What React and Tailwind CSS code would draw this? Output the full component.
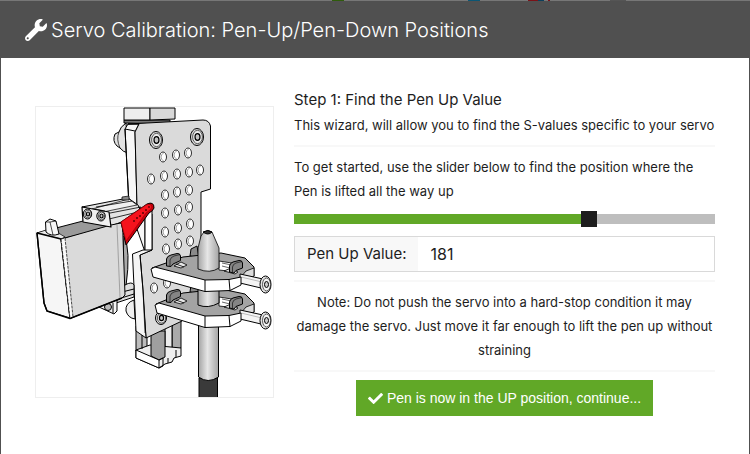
import { useState } from 'react';
import { FaCheck, FaWrench } from 'react-icons/fa';

const MAX_S_VALUE = 255;

const HOLES = [
    [163, 157], [176, 155], [188, 153],
    [151, 179], [164, 176], [177, 174], [189, 172], [200, 170],
    [165, 195], [177, 192], [189, 190],
    [165, 213], [178, 210], [189, 207],
    [165, 232], [178, 228], [190, 224],
    [166, 249], [178, 244], [190, 241],
    [154, 288], [167, 283],
];

const Screw = ({ x, y, rx = 6.5, ry = 8.5 }) => (
    <g>
        <ellipse cx={x} cy={y} rx={rx} ry={ry} fill="#dadada" />
        <ellipse cx={x + 0.5} cy={y} rx={rx * 0.75} ry={ry * 0.78} fill="#ececec" strokeWidth="0.6" />
        <ellipse cx={x + 0.5} cy={y} rx={rx * 0.38} ry={ry * 0.4} fill="#c4c4c4" strokeWidth="1.2" />
    </g>
);

// dx moves only the left end, the lower clamp is a bit shorter than the upper one
const Clamp = ({ y, dx = 0 }) => (
    <g transform={`translate(0 ${y})`}>
        <path d="M190 256 L191 249 L197 246 L199 258 Z" fill="#8a8a8a" />
        <path d={`M${152 + dx} 268 L183 257 L221 253 L245 258 L254 267 V276 L241 281 L205 284 Z`} fill="#a3a3a3" />
        <path d="M241 277 L246 271 L254 268 V276 L241 282 Z" fill="#dcdcdc" strokeWidth="0.8" />
        <path d="M219 261 L238 264 L228 271 L219 270 Z" fill="#fff" strokeWidth="0.8" />
        <path d="M222 263 L234 265.5 M222 266 L230 268" strokeWidth="0.6" />
        <path d="M240 274 L263 279 L261 288 L240 283 Z" fill="#f4f4f4" />
        <path d="M241 277 L262 282" stroke="#bbb" />
        <ellipse cx="265.5" cy="284.5" rx="5.5" ry="8.5" fill="#e4e4e4" />
        <ellipse cx="266.5" cy="284.5" rx="4" ry="6.5" fill="#f4f4f4" strokeWidth="0.6" />
        <ellipse cx="266.5" cy="284.5" rx="2" ry="3" fill="#ccc" />
        <path d={`M${151 + dx} 269 L${155 + dx} 267 L205 280 L229 279.5 L241 277 V285 L230 290.5 L205 291.5 L${153 + dx} 277 Z`} fill="#fff" />
        <path d="M205 280 V291.5 M229 279.5 L230 290.5" />
        <path d="M174 266 L181 262 L187 265 L181 268 Z" fill="#e8e8e8" strokeWidth="0.8" />
        <path d="M176 264 L184 267" strokeWidth="0.8" />
        <path d="M166.500 266 V259 Q167 256 171 255 L177 253.500 Q180 253 180.500 256 V260.500 L173 264 L171 266.500 Z" fill="#858585" />
        <path d="M170 266 V260 Q171 257 174 256 L180 254.500" strokeWidth="0.600" />
        <path d="M224 271 L231 268 L238 272 L235 274 Z" fill="#ddd" strokeWidth="0.800" />
        <path d="M229.500 272 V266 Q230 263 233 262 L239 260.500 Q242 260 242.500 263 V268 L236 270.500 L234 273 Z" fill="#858585" />
        <path d="M232.500 272 V267 Q233 264 236 263 L242 261.500" strokeWidth="0.600" />
    </g>
);

const ServoDrawing = () => (
    <svg viewBox="36 107 237 290" className="block w-full" role="img" aria-label="Pen holder with servo in the pen-up position" strokeLinejoin="round">
        <defs>
            <linearGradient id="pen" x1="0" x2="1">
                <stop offset="0" stopColor="#a4a4a4" />
                <stop offset="0.45" stopColor="#e6e6e6" />
                <stop offset="1" stopColor="#a4a4a4" />
            </linearGradient>
        </defs>
        <g fill="none" stroke="#000" strokeWidth="1">
            {/* spindle mount and knob at the top */}
            <path d="M126 123 Q120 127 119 132 L115 134 Q112 141 117 146 L120 148 Q123 152 128 153 Z" fill="#e2e2e2" />
            <path d="M119 132 Q116 139 120 148" strokeWidth="0.7" />
            <path d="M124 120 H170 V124 L124 123 Z" fill="#777" />
            <path d="M124 108 H150 V120 H124 Z" fill="#ededed" />
            <path d="M150 108 H175 V119 L150 120 Z" fill="#d8d8d8" />

            {/* pins under the plate */}
            <path d="M136 326 H147 V350 L136 351 Z" fill="#bdbdbd" />
            <path d="M172 318 H181 V348 L172 352 Z" fill="#aaa" />
            <path d="M165 324 H172 V355 H165 Z" fill="#ececec" />
            <path d="M136 350 L150 345 L181 348 V356 L174 358 L172 362 L165 364 L159 368 L136 358 Z" fill="#efefef" />
            <path d="M151 331 H165 V357 L159 360 L151 356 Z" fill="#9f9f9f" />
            <path d="M136 350 L159 360 V368 L136 358 Z" fill="#fff" />
            <path d="M159 360 L163 358 V366 L159 368 M142 331 V349 M168 358 V363 M176 350 V357" />

            {/* main plate */}
            <path d="M128 124 L139 124 L135 132 L137 206 L145 215 V252 L129 206 L125 129 Z" fill="#f7f7f7" />
            <path d="M128 124 L203 120 Q209 120 210.5 126 V189 L201 192 V262 L182 321 L146 338 L140 255 L152 250 V214 L137 206 L135 132 L139 124 Z" fill="#dadada" />
            <path d="M125 129 L135 131 M125 129 L129 206" />
            <path d="M145 212 L152 208 V250 L145 252 Z" fill="#fff" />
            <path d="M132.5 254 L143 250 H152 L140 255 L143 290 L146 338 L136 331 Z" fill="#f5f5f5" />
            <path d="M140 255 L143 290 L145 333" strokeWidth="0.7" />
            {HOLES.map(([x, y]) => (
                <g key={`${x}-${y}`}>
                    <ellipse cx={x} cy={y} rx="3.5" ry="5" fill="#fff" strokeWidth="0.8" />
                    <path d={`M${x + 1} ${y - 4.5} Q${x - 5} ${y} ${x + 1} ${y + 4.5}`} stroke="#444" strokeWidth="0.5" />
                </g>
            ))}
            <Screw x={156} y={140} />
            <Screw x={197} y={137} />
            <Screw x={161} y={318} rx={5.5} ry={6.5} />

            {/* servo rails */}
            <path d="M82 207 L128 198 L138 205 L142 214 L111 226 L100 212 Z" fill="#e4e4e4" />
            <path d="M92 209 L129 199 L137 205 L103 212 Z" fill="#f0f0f0" strokeWidth="0.7" />
            <path d="M96 207 L132 201 M105 214 L141 207 M109 219 L138 212" strokeWidth="0.8" />
            <path d="M122 197 L129 196 V200 H122 Z" fill="#888" strokeWidth="0.7" />
            <path d="M124 236 Q131 250 126 286 L122 284 Z" fill="#aaa" />
            <path d="M125 285 Q132 281 134 285 V297 L116 303 L113 298 Z" fill="#dedede" />
            <path d="M122 292 L134 289 M118 299 L134 294" />
            <path d="M134 300 Q125 303 126 311 Q128 318 135 319 Z" fill="#eee" />
            <path d="M99 307 L104 303 L117 300 V311 L114 314 Z" fill="#f4f4f4" />
            <ellipse cx="108" cy="307" rx="3.5" ry="3.5" fill="#bbb" />
            <path d="M113 303 V313" />

            {/* servo body */}
            <path d="M37 233 L83 221 L111 227 L65 238 Z" fill="#9a9a9a" />
            <path d="M37 233 L46 230 L60 234 L65 237 L61 239 Z" fill="#e9e9e9" strokeWidth="0.7" />
            <path d="M37 233 L61 239 L70 318 L47 311 L44 303 Z" fill="#f6f6f6" strokeWidth="1.3" />
            <path d="M65 238 L111 225 L121 223 Q123 226 123 238 L125 295 L122 298 L70 318.5 L61 239 Z" fill="#dadada" />
            <path d="M61 239 L65 238 L73 317 L70 318.5 Z" fill="#fafafa" strokeWidth="0.7" strokeDasharray="3 1" />
            <path d="M117 225 L120 298" stroke="#888" strokeWidth="0.7" />
            <path d="M37 233 L44 303 L47 311 L70 318.5 L122 298" strokeWidth="1.4" />
            <path d="M46 232 L45.5 222 L50 219 L56 221 L59 234 Q51 237 46 232 Z" fill="#f7f7f7" />
            <path d="M50 222 L53 235 M45.5 222 L50 222 L56 221" strokeWidth="0.7" />
            <path d="M82 207 L109 212 L111 227 L83 222 Z" fill="#f0f0f0" strokeWidth="1.2" />
            <path d="M95 209 L105 211" strokeWidth="0.7" />
            <Screw x={87.5} y={214} rx={4.2} ry={5} />
            <Screw x={101} y={216} rx={4.2} ry={5} />

            {/* servo horn */}
            <path d="M121 222 L147 204 Q154 201 154 208 Q153 211 149 213 L126 245 Z" fill="#c9000b" />
            <path d="M121 222 L146 205 Q151 203 152 207 Q151 210 146 213 L126 241 Z" fill="#f5131d" stroke="#a00008" strokeWidth="0.7" />
            <g fill="#5e0006" stroke="none">
                <circle cx="134" cy="221" r="1" />
                <circle cx="137" cy="218" r="1" />
                <circle cx="140" cy="216" r="1" />
                <circle cx="143" cy="213" r="1" />
                <circle cx="146" cy="210" r="1" />
                <circle cx="149" cy="207" r="0.9" />
            </g>

            {/* pen and the two clamps that hold it */}
            <path d="M199 378 H217.5 V398 H199 Z" fill="#3a3a3a" />
            <path d="M198.5 320 H218.5 V377 Q208 384 198.5 377 Z" fill="url(#pen)" />
            <Clamp y={36} dx={4} />
            <path d="M198 285 H219 V303 Q208 309 198 305 Z" fill="url(#pen)" />
            <Clamp y={0} />
            <path d="M204 232 Q208 229 212 232 L219 248 V268 Q210 274 198 269 V248 L201 236 Z" fill="url(#pen)" strokeWidth="0.8" />
            <path d="M203 232 Q208 229 212 232 Q208 236 203 232 Z" fill="#333" />
        </g>
    </svg>
);

// sliver of the toolbar that stays visible above the dialog
const BackdropEdge = () => (
    <div className="flex h-px bg-[#777777]">
        <span className="w-[332px]" />
        <span className="w-3 bg-[#2f5c0c]" />
        <span className="w-[124px]" />
        <span className="w-3 bg-[#0b5674]" />
        <span className="w-12" />
        <span className="w-2.5 bg-[#7a1218]" />
        <span className="w-1.5 bg-[#0b3f5c]" />
        <span className="w-1" />
        <span className="w-0.5 bg-[#7a1218]" />
        <span className="w-[60px]" />
        <span className="w-4 bg-[#555555]" />
    </div>
);

const Rule = () => <hr className="my-2 border-0 h-0.5 bg-[#f8f8f8]" />;

const App = () => {
    const [penUp, setPenUp] = useState(181);

    const percent = (penUp / MAX_S_VALUE) * 100;

    return (
        <div className="min-h-screen flex flex-col bg-white font-['Inter','Noto_Sans',sans-serif] text-[#1d1d1d]">
            <BackdropEdge />
            <header className="flex items-center gap-1 px-[25px] h-[57px] bg-[#505050] text-white">
                <FaWrench className="w-[22px] h-[22px]" />
                <h1 className="text-xl leading-7 font-light">Servo Calibration: Pen-Up/Pen-Down Positions</h1>
            </header>

            <main className="grow flex items-start gap-5 px-[34px] pt-8 border-x border-[#505050]">
                <div className="w-[239px] shrink-0 mt-4 border border-[#eeeeee]">
                    <ServoDrawing />
                </div>

                <div className="grow min-w-0">
                    <h2 className="text-[15px] leading-5">Step 1: Find the Pen Up Value</h2>
                    <p className="text-[13px] leading-6 mt-[3px]">This wizard, will allow you to find the S-values specific to your servo</p>
                    <Rule />
                    <p className="text-[13px] leading-6">To get started, use the slider below to find the position where the Pen is lifted all the way up</p>

                    <input
                        type="range"
                        min="0"
                        max={MAX_S_VALUE}
                        value={penUp}
                        onChange={e => setPenUp(Number(e.target.value))}
                        aria-label="Pen up position"
                        style={{ backgroundImage: `linear-gradient(to right, #61a827 ${percent}%, #bebebe ${percent}%)` }}
                        className="block w-full h-2.5 mt-[11px] mb-3 appearance-none outline-none [&::-webkit-slider-thumb]:appearance-none [&::-webkit-slider-thumb]:w-4 [&::-webkit-slider-thumb]:h-4 [&::-webkit-slider-thumb]:bg-[#1d1d1d]"
                    />

                    <div className="flex h-9 border border-[#d9d9d9]">
                        <label htmlFor="pen-up-value" className="flex items-center px-3 bg-[#f8f8f8] text-[15px] whitespace-nowrap">Pen Up Value:</label>
                        <input
                            id="pen-up-value"
                            type="text"
                            value={penUp}
                            onChange={e => setPenUp(Number(e.target.value) || 0)}
                            className="grow min-w-0 px-3 text-base outline-none"
                        />
                    </div>
                    <Rule />
                    <div className="text-center">
                        <p className="text-[13px] leading-6">Note: Do not push the servo into a hard-stop condition it may damage the servo. Just move it far enough to lift the pen up without straining</p>
                        <Rule />
                        <button type="button" className="inline-flex items-center gap-1 h-9 px-3 bg-[#61a827] hover:bg-[#6fbf2f] text-white text-sm font-['Liberation_Sans',Arial,sans-serif]">
                            <FaCheck className="w-[15px] h-[15px]" />
                            Pen is now in the UP position, continue...
                        </button>
                    </div>
                </div>
            </main>
        </div>
    );
};

export default App;
